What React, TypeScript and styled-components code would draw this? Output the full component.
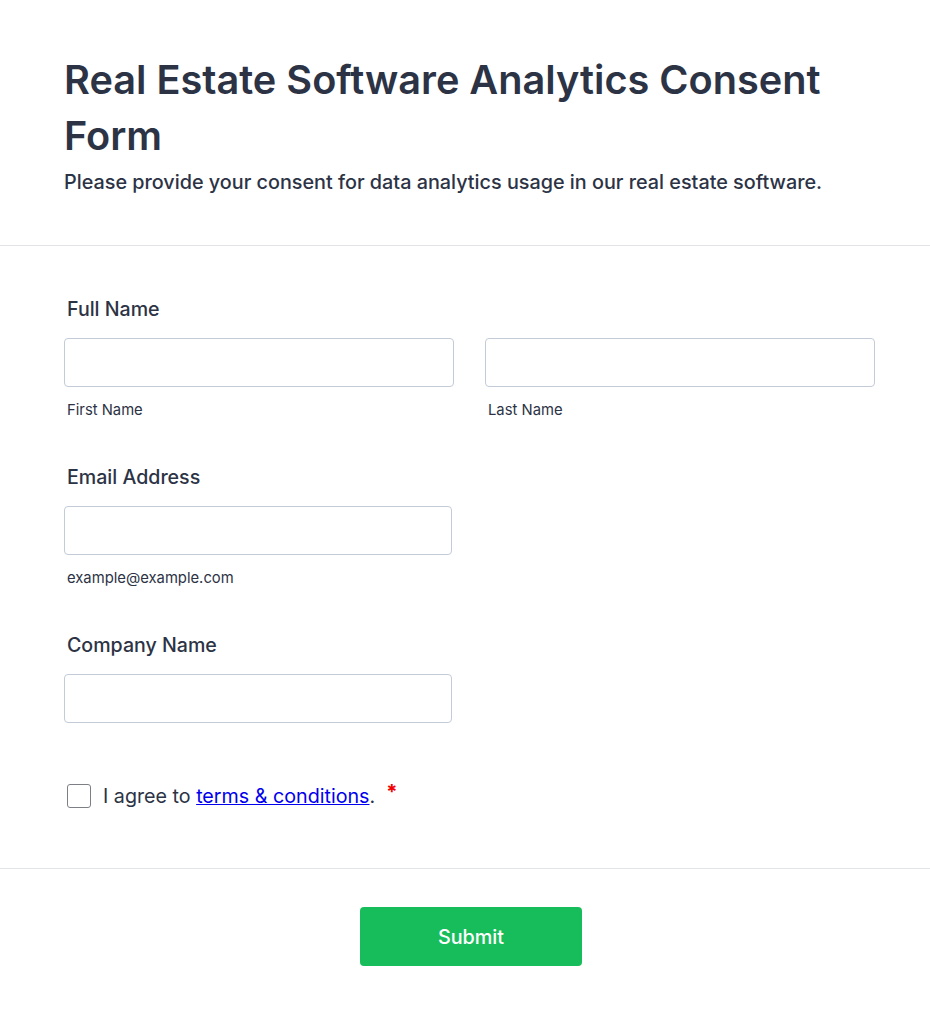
import React from 'react';
import styled, { createGlobalStyle } from 'styled-components';

const GlobalStyle = createGlobalStyle`
  html, body {
    margin: 0;
    padding: 0;
    background: #fff;
  }
  body {
    font-family: Inter, "Noto Sans", sans-serif;
    color: #2c3345;
  }
  * {
    box-sizing: border-box;
  }
`;

const Page = styled.div`
  width: 930px;
  background: #fff;
`;

const Header = styled.header`
  padding: 52px 64px 51px;
  border-bottom: 1px solid #e3e4e8;
`;

const Title = styled.h1`
  margin: 0;
  font-size: 39.7px;
  line-height: 56px;
  font-weight: 600;
  color: #2c3345;
`;

const Subtitle = styled.p`
  margin: 6px 0 0;
  font-size: 19.8px;
  line-height: 24px;
  font-weight: 500;
  color: #2c3345;
`;

const Body = styled.main`
  padding: 51px 55px 60px 64px;
  display: flex;
  flex-direction: column;
  border-bottom: 1px solid #e3e4e8;
`;

const Field = styled.div<{ $width?: number }>`
  display: flex;
  flex-direction: column;
  width: ${p => (p.$width ? `${p.$width}px` : '100%')};
  margin-bottom: 46px;
`;

const Label = styled.label`
  padding-left: 3px;
  font-size: 19.6px;
  line-height: 24px;
  font-weight: 500;
  color: #2c3345;
  margin-bottom: 17px;
`;

const Row = styled.div`
  display: flex;
  gap: 31px;
`;

const Col = styled.div`
  flex: 1;
  display: flex;
  flex-direction: column;
`;

const Input = styled.input`
  height: 49px;
  width: 100%;
  border: 1px solid #c3cad8;
  border-radius: 4px;
  padding: 0 12px;
  font-family: inherit;
  font-size: 16px;
  background: #fff;
  outline: none;
`;

const SubLabel = styled.span`
  padding-left: 3px;
  margin-top: 14px;
  font-size: 14.8px;
  line-height: 18px;
  color: #2c3345;
`;

const Consent = styled.div`
  display: flex;
  align-items: center;
  margin-top: 15px;
  padding-left: 3px;
  height: 24px;
`;

const Box = styled.span`
  width: 24px;
  height: 24px;
  border: 1px solid #7d7f87;
  border-radius: 3px;
  background: #fff;
  flex-shrink: 0;
`;

const ConsentText = styled.span`
  margin-left: 12px;
  font-size: 19.7px;
  line-height: 24px;
  color: #2c3345;

  a {
    color: #0000ee;
    text-decoration: underline;
  }
`;

const Required = styled.span`
  color: #f20000;
  font-size: 20px;
  font-weight: 700;
  margin-left: 11px;
  position: relative;
  top: -4px;
`;

const Footer = styled.footer`
  display: flex;
  justify-content: center;
  padding: 38px 0 50px;
`;

const SubmitButton = styled.button`
  width: 222px;
  height: 59px;
  margin-left: 12px;
  border: none;
  border-radius: 4px;
  background: #18bd5b;
  color: #fff;
  font-family: inherit;
  font-size: 19.8px;
  font-weight: 500;
  cursor: pointer;
`;

export default function App() {
  return (
    <Page>
      <GlobalStyle />
      <Header>
        <Title>Real Estate Software Analytics Consent Form</Title>
        <Subtitle>Please provide your consent for data analytics usage in our real estate software.</Subtitle>
      </Header>
      <Body>
        <Field>
          <Label>Full Name</Label>
          <Row>
            <Col>
              <Input type="text" />
              <SubLabel>First Name</SubLabel>
            </Col>
            <Col>
              <Input type="text" />
              <SubLabel>Last Name</SubLabel>
            </Col>
          </Row>
        </Field>
        <Field $width={388}>
          <Label>Email Address</Label>
          <Input type="email" />
          <SubLabel>example@example.com</SubLabel>
        </Field>
        <Field $width={388}>
          <Label>Company Name</Label>
          <Input type="text" />
        </Field>
        <Consent>
          <Box />
          <ConsentText>
            I agree to <a href="#">terms &amp; conditions</a>.
          </ConsentText>
          <Required>*</Required>
        </Consent>
      </Body>
      <Footer>
        <SubmitButton>Submit</SubmitButton>
      </Footer>
    </Page>
  );
}
